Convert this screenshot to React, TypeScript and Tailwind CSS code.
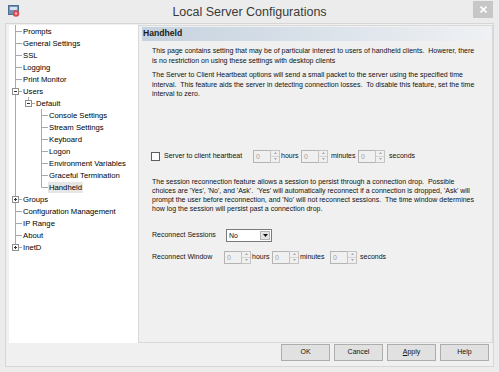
import React from 'react'

type Row = {
  label: string
  guides: boolean[]
  last: boolean
  exp?: '-' | '+'
  selected?: boolean
}

const rows: Row[] = [
  { label: 'Prompts', guides: [], last: false },
  { label: 'General Settings', guides: [], last: false },
  { label: 'SSL', guides: [], last: false },
  { label: 'Logging', guides: [], last: false },
  { label: 'Print Monitor', guides: [], last: false },
  { label: 'Users', guides: [], last: false, exp: '-' },
  { label: 'Default', guides: [true], last: true, exp: '-' },
  { label: 'Console Settings', guides: [true, false], last: false },
  { label: 'Stream Settings', guides: [true, false], last: false },
  { label: 'Keyboard', guides: [true, false], last: false },
  { label: 'Logon', guides: [true, false], last: false },
  { label: 'Environment Variables', guides: [true, false], last: false },
  { label: 'Graceful Termination', guides: [true, false], last: false },
  { label: 'Handheld', guides: [true, false], last: true, selected: true },
  { label: 'Groups', guides: [], last: false, exp: '+' },
  { label: 'Configuration Management', guides: [], last: false },
  { label: 'IP Range', guides: [], last: false },
  { label: 'About', guides: [], last: false },
  { label: 'InetD', guides: [], last: true, exp: '+' },
]

const Guide = ({ on }: { on: boolean }) => (
  <svg width="13" height="12" className="shrink-0">
    {on && <line x1="5.5" y1="0" x2="5.5" y2="12" stroke="#a9a9a9" />}
  </svg>
)

const Connector = ({ last, exp }: { last: boolean; exp?: '-' | '+' }) => (
  <svg width="13" height="12" className="shrink-0">
    <line x1="5.5" y1="0" x2="5.5" y2={last ? 6.5 : 12} stroke="#a9a9a9" />
    <line x1="5.5" y1="6.5" x2="12" y2="6.5" stroke="#a9a9a9" />
    {exp && (
      <>
        <rect x="2.5" y="3.5" width="6" height="6" fill="#fff" stroke="#8f8f8f" />
        <line x1="4" y1="6.5" x2="7" y2="6.5" stroke="#333" />
        {exp === '+' && <line x1="5.5" y1="5" x2="5.5" y2="8" stroke="#333" />}
      </>
    )}
  </svg>
)

const Spin = () => (
  <div className="flex h-[13px] w-[27px] shrink-0">
    <div className="w-[17px] h-full border border-[#b4b4b4] border-r-0 bg-[#f0f0f0] text-[#a3a3a3] text-[7px] leading-[11px] pl-[2px]">
      0
    </div>
    <div className="w-[10px] h-full flex flex-col border border-[#c4c4c4] bg-[#f0f0f0]">
      <div className="flex-1 flex items-center justify-center border-b border-[#d4d4d4]">
        <svg width="3" height="2"><path d="M1.5 0 L3 2 L0 2 Z" fill="#a8a8a8" /></svg>
      </div>
      <div className="flex-1 flex items-center justify-center">
        <svg width="3" height="2"><path d="M0 0 L3 0 L1.5 2 Z" fill="#a8a8a8" /></svg>
      </div>
    </div>
  </div>
)

const Btn = ({ children }: { children: React.ReactNode }) => (
  <div className="w-[49px] h-[17px] bg-[#e1e1e1] border border-[#adadad] flex items-center justify-center text-[7px] text-[#111]">
    {children}
  </div>
)

export default function App() {
  return (
    <div className="w-[499px] h-[372px] bg-[#ececec] flex flex-col overflow-hidden font-['Liberation_Sans',Arial,sans-serif]">
      {/* Title bar */}
      <div className="h-[23px] grid grid-cols-[40px_1fr_40px] shrink-0">
        <div className="pl-[8px] pt-[5px]">
          <svg width="12" height="12">
            <rect x="0.5" y="0.5" width="10" height="9" fill="#6f93b8" stroke="#4d6f92" />
            <rect x="2" y="2" width="7" height="3" fill="#d6e3ef" />
            <circle cx="8" cy="8.5" r="3.2" fill="#d9474f" />
            <circle cx="8" cy="8.5" r="1.3" fill="#f4b6b9" />
          </svg>
        </div>
        <div className="flex items-center justify-center text-[12.5px] text-[#3a3a3a] pt-[1px]">
          Local Server Configurations
        </div>
        <div className="flex justify-end pr-[6px] pt-[1px]">
          <div className="w-[20px] h-[17px] bg-[#c7c7c7] flex items-center justify-center">
            <svg width="7" height="7">
              <path d="M0.5 0.5 L6.5 6.5 M6.5 0.5 L0.5 6.5" stroke="#fff" strokeWidth="1.6" />
            </svg>
          </div>
        </div>
      </div>

      {/* Client area */}
      <div className="mx-[5px] mb-[5px] flex-1 border border-[#d6d6d6] bg-[#f0f0f0] flex flex-col pl-[3px] pt-[1px]">
        <div className="flex h-[318px]">
          {/* Tree */}
          <div className="w-[129px] bg-white pt-[0px] pl-[1px] text-[7.7px] text-black">
            {rows.map((r) => (
              <div key={r.label} className="flex h-[12px] items-center whitespace-nowrap">
                {r.guides.map((g, i) => (
                  <Guide key={i} on={g} />
                ))}
                <Connector last={r.last} exp={r.exp} />
                <span className={r.selected ? 'bg-[#e6e6e6] px-[1px] -ml-[1px] leading-[11px]' : 'leading-[11px]'}>
                  {r.label}
                </span>
              </div>
            ))}
          </div>

          {/* Settings panel */}
          <div className="flex-1 border border-[#d9d9d9] flex flex-col text-[7px] text-[#111] leading-[9.5px]">
            <div className="mt-[1px] ml-[3px] mr-[1px] h-[14px] bg-gradient-to-r from-[#c5d2df] to-[#eff1f4] flex items-center pl-[1px] text-[8.6px] font-bold text-[#1a1a1a]">
              Handheld
            </div>

            <div className="pl-[13px] whitespace-nowrap">
              <p className="mt-[5px]">
                This page contains setting that may be of particular interest to users of handheld clients.&nbsp; Howerer, there
                <br />
                is no restriction on using these settings with desktop clients
              </p>
              <p className="mt-[5px]">
                The Server to Client Heartbeat options will send a small packet to the server using the specified time
                <br />
                interval.&nbsp; This feature aids the server in detecting connection losses.&nbsp; To disable this feature, set the time
                <br />
                interval to zero.
              </p>

              <div className="mt-[51px] flex items-center h-[13px]">
                <div className="w-[102px] flex items-center -ml-[1px]">
                  <div className="w-[9px] h-[9px] border border-[#5e5e5e] bg-white mr-[4px]" />
                  <span>Server to client heartbeat</span>
                </div>
                <Spin />
                <span className="w-[21px] pl-[1px]">hours</span>
                <Spin />
                <span className="w-[30px] pl-[3px]">minutes</span>
                <Spin />
                <span className="pl-[4px]">seconds</span>
              </div>

              <p className="mt-[14px] leading-[9.3px]">
                The session reconnection feature allows a session to persist through a connection drop.&nbsp; Possible
                <br />
                choices are 'Yes', 'No', and 'Ask'.&nbsp; 'Yes' will automatically reconnect if a connection is dropped, 'Ask' will
                <br />
                prompt the user before reconnection, and 'No' will not reconnect sessions.&nbsp; The time window determines
                <br />
                how log the session will persist past a connection drop.
              </p>

              <div className="mt-[15px] flex items-center h-[13px]">
                <span className="w-[74px]">Reconnect Sessions</span>
                <div className="w-[46px] h-[13px] bg-white border border-[#7a7a7a] flex">
                  <span className="flex-1 pl-[2px] leading-[11px]">No</span>
                  <div className="w-[10px] my-[1px] mr-[1px] bg-[#e3e3e3] border border-[#b5b5b5] flex items-center justify-center">
                    <svg width="5" height="3"><path d="M0 0 L5 0 L2.5 3 Z" fill="#111" /></svg>
                  </div>
                </div>
              </div>

              <div className="mt-[9px] flex items-center h-[13px]">
                <span className="w-[72px]">Reconnect Window</span>
                <Spin />
                <span className="w-[21px] pl-[1px]">hours</span>
                <Spin />
                <span className="w-[31px] pl-[1px]">minutes</span>
                <Spin />
                <span className="pl-[3px]">seconds</span>
              </div>
            </div>
          </div>
        </div>

        {/* Buttons */}
        <div className="mt-[1px] flex justify-end gap-[4px] pr-[4px]">
          <Btn>OK</Btn>
          <Btn>Cancel</Btn>
          <Btn>
            <span>
              <span className="underline">A</span>pply
            </span>
          </Btn>
          <Btn>Help</Btn>
        </div>
      </div>
    </div>
  )
}
